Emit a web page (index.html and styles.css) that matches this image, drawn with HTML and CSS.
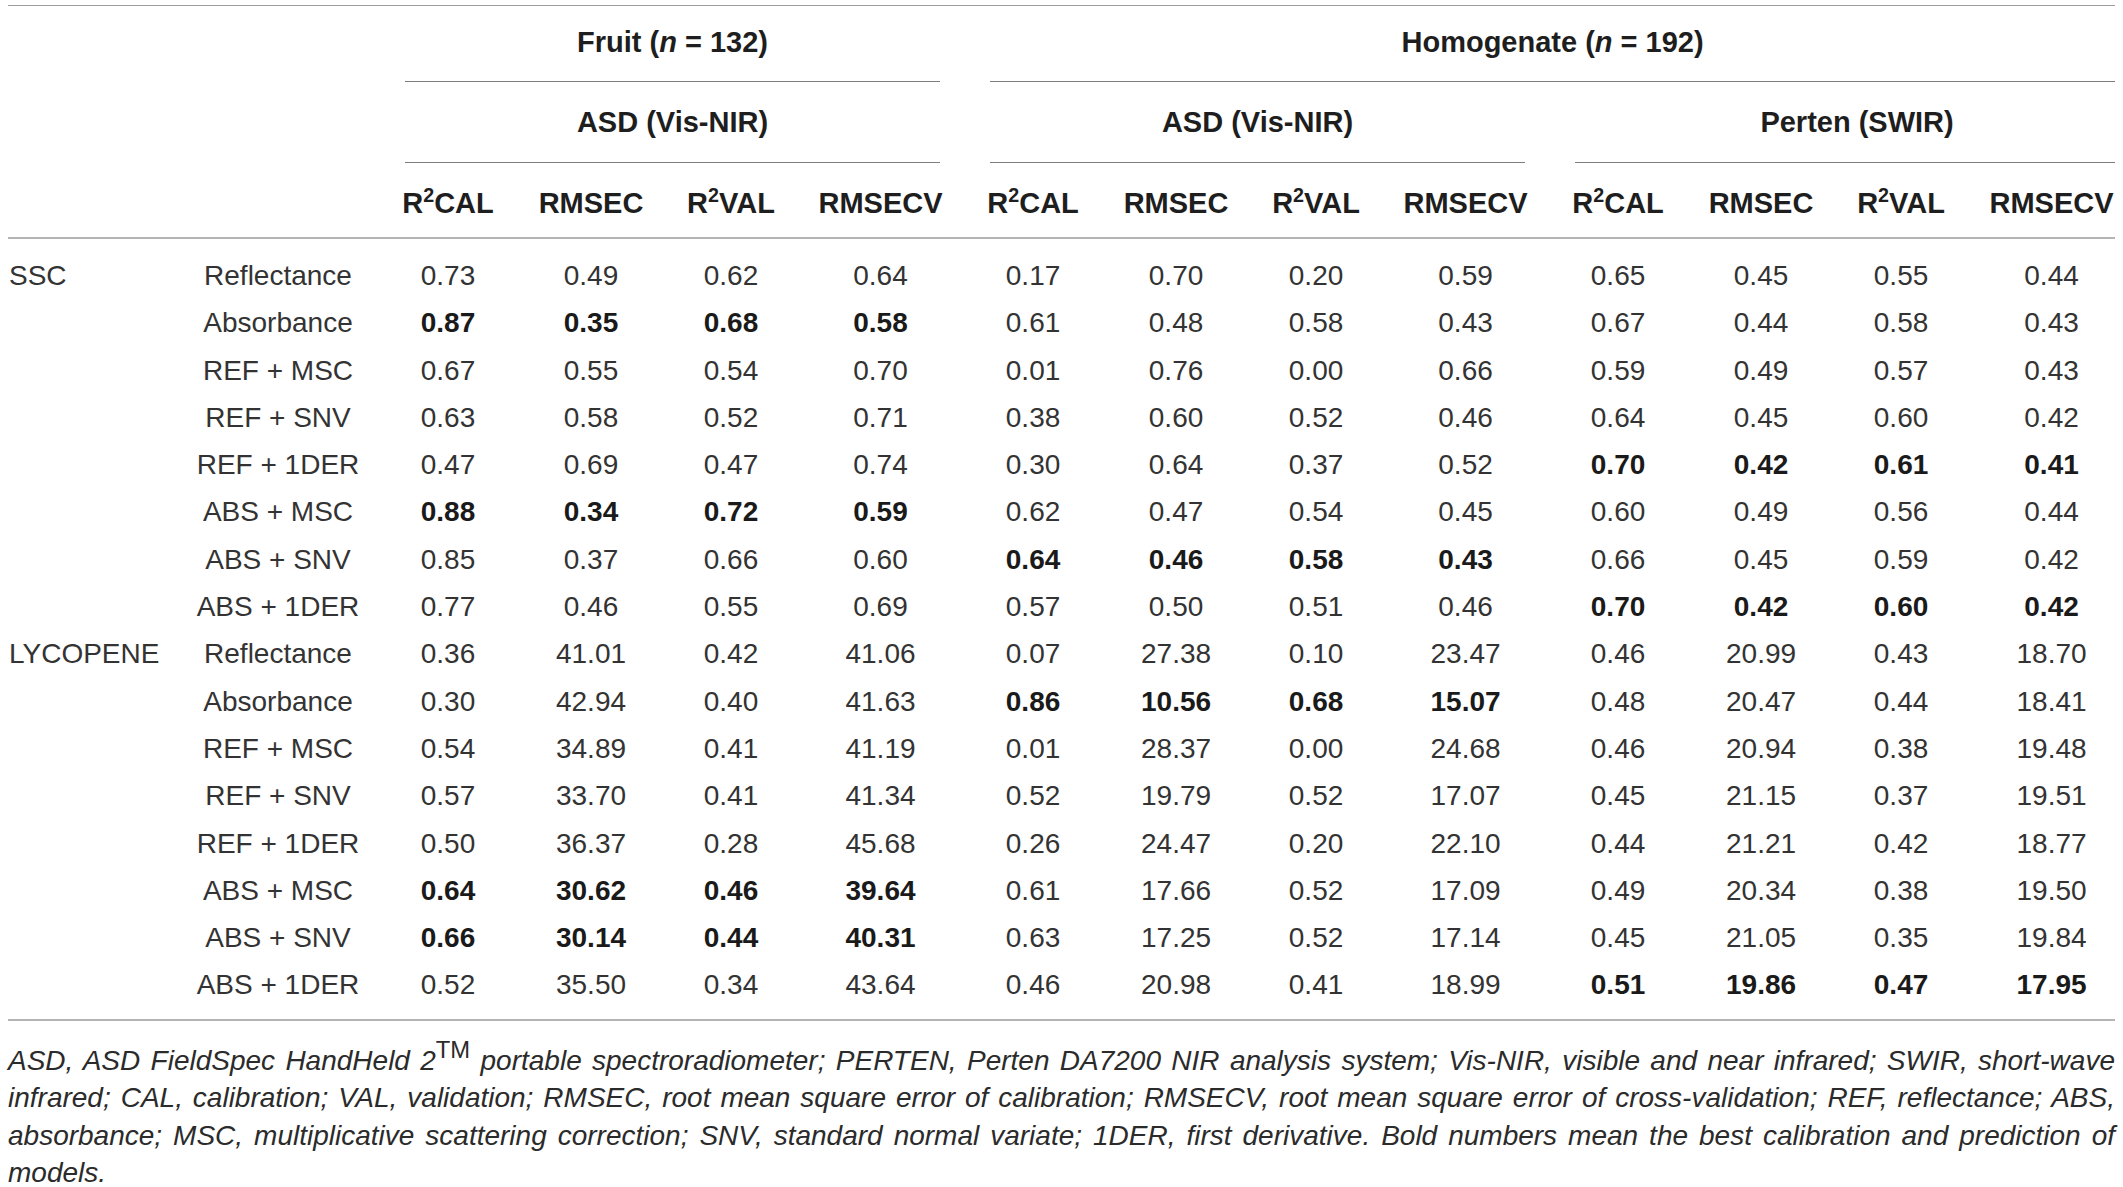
FILE: index.html
```html
<!DOCTYPE html>
<html lang="en">
<head>
<meta charset="utf-8">
<title>Table</title>
<link rel="stylesheet" href="styles.css">
</head>
<body>
<div class="page">
<table class="results">
  <colgroup>
    <col class="c-a"><col class="c-b">
    <col class="d1"><col class="d2"><col class="d3"><col class="d4">
    <col class="d1"><col class="d2"><col class="d3"><col class="d4">
    <col class="d1"><col class="d2"><col class="d3"><col class="d5">
  </colgroup>
  <thead>
    <tr class="hr1">
      <th colspan="2"></th>
      <th colspan="4"><div class="grp g1">Fruit (<i>n</i> = 132)</div></th>
      <th colspan="8"><div class="grp g2">Homogenate (<i>n</i> = 192)</div></th>
    </tr>
    <tr class="hr2">
      <th colspan="2"></th>
      <th colspan="4"><div class="grp g1">ASD (Vis-NIR)</div></th>
      <th colspan="4"><div class="grp g1">ASD (Vis-NIR)</div></th>
      <th colspan="4"><div class="grp g3">Perten (SWIR)</div></th>
    </tr>
    <tr class="hr3">
      <th></th><th></th>
      <th>R<sup>2</sup>CAL</th><th>RMSEC</th><th>R<sup>2</sup>VAL</th><th>RMSECV</th>
      <th>R<sup>2</sup>CAL</th><th>RMSEC</th><th>R<sup>2</sup>VAL</th><th>RMSECV</th>
      <th>R<sup>2</sup>CAL</th><th>RMSEC</th><th>R<sup>2</sup>VAL</th><th class="last">RMSECV</th>
    </tr>
  </thead>
  <tbody>
    <tr><td class="grp-name">SSC</td><td class="lbl">Reflectance</td><td>0.73</td><td>0.49</td><td>0.62</td><td>0.64</td><td>0.17</td><td>0.70</td><td>0.20</td><td>0.59</td><td>0.65</td><td>0.45</td><td>0.55</td><td class="last">0.44</td></tr>
    <tr><td></td><td class="lbl">Absorbance</td><td class="b">0.87</td><td class="b">0.35</td><td class="b">0.68</td><td class="b">0.58</td><td>0.61</td><td>0.48</td><td>0.58</td><td>0.43</td><td>0.67</td><td>0.44</td><td>0.58</td><td class="last">0.43</td></tr>
    <tr><td></td><td class="lbl">REF + MSC</td><td>0.67</td><td>0.55</td><td>0.54</td><td>0.70</td><td>0.01</td><td>0.76</td><td>0.00</td><td>0.66</td><td>0.59</td><td>0.49</td><td>0.57</td><td class="last">0.43</td></tr>
    <tr><td></td><td class="lbl">REF + SNV</td><td>0.63</td><td>0.58</td><td>0.52</td><td>0.71</td><td>0.38</td><td>0.60</td><td>0.52</td><td>0.46</td><td>0.64</td><td>0.45</td><td>0.60</td><td class="last">0.42</td></tr>
    <tr><td></td><td class="lbl">REF + 1DER</td><td>0.47</td><td>0.69</td><td>0.47</td><td>0.74</td><td>0.30</td><td>0.64</td><td>0.37</td><td>0.52</td><td class="b">0.70</td><td class="b">0.42</td><td class="b">0.61</td><td class="b last">0.41</td></tr>
    <tr><td></td><td class="lbl">ABS + MSC</td><td class="b">0.88</td><td class="b">0.34</td><td class="b">0.72</td><td class="b">0.59</td><td>0.62</td><td>0.47</td><td>0.54</td><td>0.45</td><td>0.60</td><td>0.49</td><td>0.56</td><td class="last">0.44</td></tr>
    <tr><td></td><td class="lbl">ABS + SNV</td><td>0.85</td><td>0.37</td><td>0.66</td><td>0.60</td><td class="b">0.64</td><td class="b">0.46</td><td class="b">0.58</td><td class="b">0.43</td><td>0.66</td><td>0.45</td><td>0.59</td><td class="last">0.42</td></tr>
    <tr><td></td><td class="lbl">ABS + 1DER</td><td>0.77</td><td>0.46</td><td>0.55</td><td>0.69</td><td>0.57</td><td>0.50</td><td>0.51</td><td>0.46</td><td class="b">0.70</td><td class="b">0.42</td><td class="b">0.60</td><td class="b last">0.42</td></tr>
    <tr><td class="grp-name">LYCOPENE</td><td class="lbl">Reflectance</td><td>0.36</td><td>41.01</td><td>0.42</td><td>41.06</td><td>0.07</td><td>27.38</td><td>0.10</td><td>23.47</td><td>0.46</td><td>20.99</td><td>0.43</td><td class="last">18.70</td></tr>
    <tr><td></td><td class="lbl">Absorbance</td><td>0.30</td><td>42.94</td><td>0.40</td><td>41.63</td><td class="b">0.86</td><td class="b">10.56</td><td class="b">0.68</td><td class="b">15.07</td><td>0.48</td><td>20.47</td><td>0.44</td><td class="last">18.41</td></tr>
    <tr><td></td><td class="lbl">REF + MSC</td><td>0.54</td><td>34.89</td><td>0.41</td><td>41.19</td><td>0.01</td><td>28.37</td><td>0.00</td><td>24.68</td><td>0.46</td><td>20.94</td><td>0.38</td><td class="last">19.48</td></tr>
    <tr><td></td><td class="lbl">REF + SNV</td><td>0.57</td><td>33.70</td><td>0.41</td><td>41.34</td><td>0.52</td><td>19.79</td><td>0.52</td><td>17.07</td><td>0.45</td><td>21.15</td><td>0.37</td><td class="last">19.51</td></tr>
    <tr><td></td><td class="lbl">REF + 1DER</td><td>0.50</td><td>36.37</td><td>0.28</td><td>45.68</td><td>0.26</td><td>24.47</td><td>0.20</td><td>22.10</td><td>0.44</td><td>21.21</td><td>0.42</td><td class="last">18.77</td></tr>
    <tr><td></td><td class="lbl">ABS + MSC</td><td class="b">0.64</td><td class="b">30.62</td><td class="b">0.46</td><td class="b">39.64</td><td>0.61</td><td>17.66</td><td>0.52</td><td>17.09</td><td>0.49</td><td>20.34</td><td>0.38</td><td class="last">19.50</td></tr>
    <tr><td></td><td class="lbl">ABS + SNV</td><td class="b">0.66</td><td class="b">30.14</td><td class="b">0.44</td><td class="b">40.31</td><td>0.63</td><td>17.25</td><td>0.52</td><td>17.14</td><td>0.45</td><td>21.05</td><td>0.35</td><td class="last">19.84</td></tr>
    <tr><td></td><td class="lbl">ABS + 1DER</td><td>0.52</td><td>35.50</td><td>0.34</td><td>43.64</td><td>0.46</td><td>20.98</td><td>0.41</td><td>18.99</td><td class="b">0.51</td><td class="b">19.86</td><td class="b">0.47</td><td class="b last">17.95</td></tr>
  </tbody>
</table>
<div class="notes">
  <p class="line">ASD, ASD FieldSpec HandHeld 2<sup class="tm">TM</sup> portable spectroradiometer; PERTEN, Perten DA7200 NIR analysis system; Vis-NIR, visible and near infrared; SWIR, short-wave</p>
  <p class="line">infrared; CAL, calibration; VAL, validation; RMSEC, root mean square error of calibration; RMSECV, root mean square error of cross-validation; REF, reflectance; ABS,</p>
  <p class="line">absorbance; MSC, multiplicative scattering correction; SNV, standard normal variate; 1DER, first derivative. Bold numbers mean the best calibration and prediction of</p>
  <p class="line last-line">models.</p>
</div>
</div>
</body>
</html>
```

FILE: styles.css
```css
html, body {
  margin: 0;
  padding: 0;
  background: #ffffff;
}

.page {
  padding: 5px 8px 0 8px;
  font-family: "Liberation Sans", Arial, Helvetica, sans-serif;
  color: #2b2b2b;
}

.results {
  width: 2107px;
  border-collapse: collapse;
  border-spacing: 0;
  table-layout: fixed;
  border-top: 1.5px solid #9c9c9c;
}

.c-a { width: 168px; }
.c-b { width: 204px; }
.d1 { width: 136px; }
.d2 { width: 150px; }
.d3 { width: 130px; }
.d4 { width: 169px; }
.d5 { width: 149px; }

.results th {
  padding: 0;
  font-weight: bold;
  font-size: 29px;
  color: #1e1e1e;
  text-align: center;
  white-space: nowrap;
}

.results th i {
  font-style: italic;
}

.grp {
  line-height: 28px;
  border-bottom: 1.5px solid #7e7e7e;
  text-align: center;
}

.hr1 .grp {
  padding: 22px 0 25px;
}

.hr2 .grp {
  padding: 26px 0 26px;
}

.g1 {
  margin: 0 25px;
}

.g2 {
  margin: 0 0 0 25px;
}

.g3 {
  margin: 0 0 0 25px;
  padding-left: 24px !important;
}

.hr3 th {
  line-height: 28px;
  padding: 26px 0 20px;
  border-bottom: 2.5px solid #b4b4b4;
}

.results sup {
  font-size: 0.68em;
  line-height: 0;
  vertical-align: 0.55em;
}

.results th.last,
.results td.last {
  padding-left: 22px;
}

.results td {
  padding: 0;
  height: 47.3px;
  line-height: 47.3px;
  font-size: 28px;
  text-align: center;
  white-space: nowrap;
  color: #333333;
}

.results td.grp-name {
  text-align: left;
  padding-left: 1px;
}

.results td.b {
  font-weight: bold;
  color: #1a1a1a;
}

.results tbody tr:first-child td {
  padding-top: 13px;
}

.results tbody tr:last-child td {
  padding-bottom: 10px;
  border-bottom: 2.5px solid #b4b4b4;
}

.notes {
  width: 2107px;
  margin-top: 21px;
}

.line {
  margin: 0;
  font-size: 28px;
  font-style: italic;
  line-height: 37.5px;
  color: #2b2b2b;
  text-align: justify;
  text-align-last: justify;
  white-space: nowrap;
}

.line.last-line {
  text-align-last: left;
}

.tm {
  font-style: normal;
  font-size: 0.85em;
  line-height: 0;
  vertical-align: 0.5em;
}
```
